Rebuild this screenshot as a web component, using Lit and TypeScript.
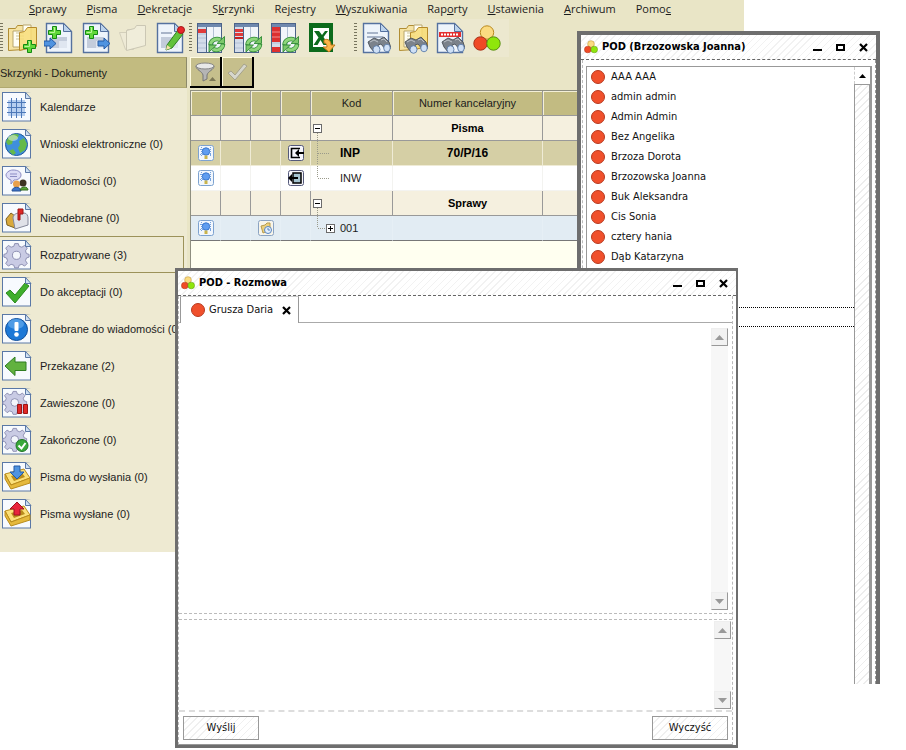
import { LitElement, html, css, svg, nothing, type TemplateResult } from "lit";
import { customElement } from "lit/decorators.js";
import { classMap } from "lit/directives/class-map.js";

/* ---------- icon parts ---------- */

const sheet = svg`
  <path d="M2.5 1.5H19.5L27.5 9.5V30.5H2.5Z" fill="#eef4fb" stroke="#55719f" stroke-width="1.4"/>
  <path d="M19.5 1.5V9.5H27.5Z" fill="#bcd3ec" stroke="#55719f"/>`;

const lines = svg`
  <path d="M6 11H17" stroke="#a8b4c8" stroke-width="2"/>
  <path d="M6 15H23V26H6Z" fill="#c3ccdb"/>
  <path d="M15 19H23V26H15Z" fill="#dfe6f0"/>`;

const plus = (x: number, y: number) => svg`
  <path d="M${x + 4.5} ${y + 0.5}h4v4h4v4h-4v4h-4v-4h-4v-4h4z" fill="#62d83a" stroke="#148a14"/>
  <path d="M${x + 5.5} ${y + 1.5}h1v5h-5" fill="none" stroke="#b9f59c"/>`;

const arrow = (x: number, y: number) => svg`
  <path d="M${x} ${y + 3}h6v-3l6 5.5l-6 5.5v-3h-6z" fill="#4f93e0" stroke="#225aa5"/>`;

const binoculars = svg`
  <g stroke="#4a5058" stroke-width="0.9">
    <path d="M7 20l6-4 5 2 5-3 5 5 2 6-5 2-5-6-3 1 1 5-5 2-4-5z" fill="#7b828b"/>
    <path d="M9 20l4-2 4 2M20 18l3-1 3 3" stroke="#c3c8cf" fill="none"/>
    <ellipse cx="15.5" cy="27.500" rx="3.500" ry="3.800" fill="#cfe0f6" stroke="#5a7ba8"/>
    <ellipse cx="26" cy="26" rx="3.300" ry="3.800" fill="#cfe0f6" stroke="#5a7ba8"/>
  </g>`;

const refresh = svg`
  <g fill="none">
    <path d="M14.500 23a6.500 6 0 0 1 10-5" stroke="#2f8a35" stroke-width="4.500"/>
    <path d="M27 22a6.500 6 0 0 1-10 5" stroke="#2f8a35" stroke-width="4.500"/>
    <path d="M14.500 22.500a6.500 6 0 0 1 10-4.500" stroke="#8fd67c" stroke-width="2.800"/>
    <path d="M27 22.500a6.500 6 0 0 1-10 4.500" stroke="#8fd67c" stroke-width="2.800"/>
  </g>
  <path d="M28.500 14.500v7h-7.500z" fill="#7cc86a" stroke="#2f8a35" stroke-width="0.900"/>
  <path d="M13 30v-7h7.500z" fill="#7cc86a" stroke="#2f8a35" stroke-width="0.900"/>`;

const folder = svg`
  <path d="M1.5 6.5h7l2-3h6v24l-15 1z" fill="#f6e3a2" stroke="#b08d33"/>
  <path d="M6 9h10V3h8v22H6z" fill="#fffef4" stroke="#b9a66c"/>
  <path d="M9 11h8M9 14h8M9 17h8" stroke="#c9c39b"/>
  <path d="M12.5 10.5l5-1 3-4h9v19l-17 4z" fill="#f8dc74" stroke="#b4892a" fill-opacity="0.85"/>`;

const registry = (red: TemplateResult<2>) => svg`
  <g transform="translate(1 0)">
    <rect x="0.5" y="1.5" width="24" height="29" fill="#f2f5fa" stroke="#4c6389"/>
    <rect x="1" y="2" width="23" height="3" fill="#6f88ae"/>
    <rect x="1" y="5" width="8" height="25" fill="#d3dcea"/>
    <path d="M1 12H9M1 16H9M1 21H9M1 26H9M16.500 5V30" stroke="#b3c0d4"/>
    <path d="M9.5 5V30" stroke="#4c6389"/>
    ${red}
  </g>${refresh}`;

const balls = svg`
  <circle cx="15" cy="9.5" r="6.7" fill="#fbdb80" stroke="#b98a20"/>
  <circle cx="8.5" cy="20.5" r="6.7" fill="#f04a25" stroke="#a8321a"/>
  <circle cx="21.5" cy="20.5" r="6.7" fill="#8fe60c" stroke="#588f12"/>`;

const gear = svg`
  <g fill="#c9cbe4" stroke="#8587ab">
    <path d="M13 4h4l1 3 3 1 3-2 3 3-2 3 1 3 3 1v3l-3 1-1 3 2 3-3 3-3-2-3 1-1 3h-4l-1-3-3-1-3 2-3-3 2-3-1-3-3-1v-3l3-1 1-3-2-3 3-3 3 2 3-1z"/>
    <circle cx="15" cy="17" r="4.5" fill="#f3f6fc"/>
  </g>`;

const tray = svg`
  <path d="M3 16L22 11L28 20L9 27Z" fill="#fbe07a" stroke="#b98c1c"/>
  <path d="M3 16V21L9 31L28 25V20L9 27Z" fill="#e5b93c" stroke="#b98c1c"/>
  <path d="M9 18L20 15L23 19L12 23Z" fill="#b98c1c"/>`;

const toolIcons: Record<string, TemplateResult<2>> = {
  folderAdd: svg`${folder}${plus(16, 18)}`,
  docIn: svg`${sheet}${lines}${plus(4, 4)}${arrow(0, 16)}`,
  docOut: svg`${sheet}${lines}${plus(4, 4)}${arrow(17, 16)}`,
  folderOff: svg`
    <path d="M1.5 10.5h7l1-3h6v20h-8z" fill="#eeead6" stroke="#d3cfbb"/>
    <path d="M8.5 8.5l8-2 2-3h9v20l-19 5z" fill="#f0edda" stroke="#cbc7b4"/>`,
  docEdit: svg`${sheet}${lines}
    <path d="M12 23L23 8L28 12L17 26L11 28Z" fill="#62c23c" stroke="#2f7f22"/>
    <path d="M11 28l1-5 4 3z" fill="#f6dfae"/>
    <circle cx="26" cy="8" r="3.5" fill="#e8262a" stroke="#a51a1a"/>`,
  reg1: registry(svg`<rect x="1" y="7" width="8" height="4" fill="#e03a3a"/>`),
  reg2: registry(svg`<path d="M1 7h8v3h-8zM1 11h8v3h-8z" fill="#e03a3a"/><path d="M1 15h8v2h-8z" fill="#c52020"/>`),
  reg3: registry(svg`<path d="M1 5h8v15h-8zM1 25h8v5h-8z" fill="#dd3030"/><path d="M1 10h8M1 15h8" stroke="#f18d8d"/>`),
  excel: svg`
    <g transform="translate(2 0)">
    <rect x="0" y="1" width="24" height="29" fill="#0c6b1c"/>
    <rect x="4" y="6" width="16" height="19" fill="#fff"/>
    <path d="M5 9h5l3 4 3-4h3l-4.500 6 5 8h-5l-3-5-3 5h-4l5-7.500z" fill="#0c6b1c"/>
    <path d="M15 18c4-2 7 1 7 5h4l-6 7-6-5h4c0-3-1-4-3-4z" fill="#fbb64a" stroke="#bd761b"/></g>`,
  docFind: svg`${sheet}<path d="M6 11H17M6 15H22" stroke="#a8b4c8" stroke-width="2"/>${binoculars}`,
  folderFind: svg`${folder}${binoculars}`,
  stampFind: svg`${sheet}
    <path d="M4 10h22v5h-22z" fill="#e53030"/>
    <path d="M6 12.500h18" stroke="#fff" stroke-width="2" stroke-dasharray="2 1"/>${binoculars}`,
  balls: svg`<g transform="translate(0 1)">${balls}</g>`,
};

const sideIcons: Record<string, TemplateResult<2>> = {
  calendar: svg`
    <rect x="6" y="8" width="17" height="16" fill="#b7cff0"/>
    <path d="M9.500 6V26M14.500 6V26M19.500 6V26M5 10.500H24M5 15.500H24M5 20.500H24" stroke="#4d78b8"/>`,
  globe: svg`
    <circle cx="14.500" cy="15.500" r="11" fill="#3f8fdc" stroke="#205a9c"/>
    <path d="M6 9c3-4 8-5 11-3l-2 4-4 1-1 4-4 1-2-3zM17 12l5-3 3 6-2 6-5 3-2-5 2-3z" fill="#65b94a"/>
    <path d="M7 22l4-2 3 4-3 2z" fill="#65b94a"/>
    <ellipse cx="11" cy="9" rx="5" ry="3" fill="#fff" opacity="0.45"/>`,
  chat: svg`
    <path d="M11 4c5 0 8 2 8 5s-3 5-7 5l-3 4v-4c-3-1-5-3-5-5s3-5 7-5z" fill="#dcdcf6" stroke="#8d8dc4"/>
    <path d="M8 8h7M8 10.500h7" stroke="#8d8dc4"/>
    <circle cx="21" cy="17" r="3.500" fill="#3c3424"/><circle cx="14.500" cy="18" r="3.500" fill="#e9a04c"/>
    <path d="M10 25c0-5 9-5 9 0z" fill="#3e74c9" stroke="#244f92"/>
    <path d="M18 24c1-4 8-4 8 0z" fill="#58a838" stroke="#326b1d"/>`,
  mailbox: svg`
    <path d="M4 16l5-6 4 3v12l-8-3z" fill="#d9a93c" stroke="#7d6323"/>
    <path d="M11 15c0-3 3-5 6-5h5c3 0 4 3 4 5v7l-13 4z" fill="#dfe1e8" stroke="#84889a"/>
    <path d="M16 6h5v5h-3v6h-2z" fill="#e02626" stroke="#9c1717"/>`,
  gear: svg`<g transform="translate(1 0) scale(0.9)">${gear}</g>`,
  check: svg`<path d="M4 16l4-3 5 5L23 6l4 3L13 26z" fill="#3fae2c" stroke="#2b8a1e"/>`,
  info: svg`
    <circle cx="14.500" cy="15.500" r="11" fill="#1d78d6" stroke="#12509a"/>
    <ellipse cx="14" cy="10" rx="8" ry="5" fill="#6fb2f0" opacity="0.6"/>
    <rect x="12.500" y="8" width="4" height="9" rx="1" fill="#fff"/>
    <circle cx="14.500" cy="20.500" r="2.300" fill="#fff"/>`,
  back: svg`<path d="M3 15L13 6V11H24V19.500H13V24.500Z" fill="#62b23f" stroke="#2f7d22"/>`,
  gearPause: svg`<g transform="translate(0 0) scale(0.850)">${gear}</g>
    <path d="M15.500 16.500h4v9h-4zM21.500 16.500h4v9h-4z" fill="#e02828" stroke="#9c1414"/>`,
  gearOk: svg`<g transform="translate(0 0) scale(0.850)">${gear}</g>
    <circle cx="20" cy="20.500" r="6" fill="#3aa93a" stroke="#1f7424"/>
    <path d="M16.500 20.500l3 3 4-5.500" fill="none" stroke="#fff" stroke-width="2"/>`,
  trayIn: svg`<g transform="translate(0 -4)">${tray}</g>
    <path d="M12 4h6v6h4l-7 7-7-7h4z" fill="#4f93e0" stroke="#225aa5"/>`,
  trayOut: svg`<g transform="translate(0 -4)">${tray}</g>
    <path d="M12 16h6v-6h4l-7-7-7 7h4z" fill="#e8243c" stroke="#9c1220"/>`,
};

const drawTool = (name: string) => html`<svg width="30" height="32" viewBox="0 0 30 32" aria-hidden="true">${toolIcons[name]}</svg>`;

const drawSide = (name: string) => html`<svg width="30" height="30" viewBox="0 0 30 30" aria-hidden="true">
  <rect x="0.500" y="0.500" width="28" height="28.500" fill="#f7fafe" stroke="#5a78a6"/>
  ${sideIcons[name]}
  <path d="M23.500 0.500L29 6.500V0Z" fill="#eeead2"/><path d="M23.500 0.500V6.500H29Z" fill="#cfe0f3" stroke="#5a78a6"/>
</svg>`;

const logo = html`<svg class="logo" width="14" height="14" viewBox="1 2 28 27" aria-hidden="true">${balls}</svg>`;

const bulb = html`<svg width="16" height="16" viewBox="0 0 16 16" aria-hidden="true">
  <rect x="0.500" y="0.500" width="15" height="15" rx="2" fill="#f2f7fd" stroke="#7da2d0"/>
  <path d="M3.500 2V12M12.500 2V12M2 4.500H14M2 9.500H14" stroke="#76a4e0" stroke-dasharray="1 1"/>
  <circle cx="8" cy="6.500" r="3.700" fill="#5f9df0" stroke="#3a78d0"/>
  <rect x="6.500" y="10.500" width="3" height="3.500" fill="#c9b44b"/>
</svg>`;

const boxIn = html`<svg width="16" height="16" viewBox="0 0 16 16" aria-hidden="true">
  <rect x="0.500" y="0.500" width="15" height="15" rx="2" fill="#f6f6fb" stroke="#54597a"/>
  <path d="M12 3.500H3.500V12.500H12" fill="none" stroke="#000" stroke-width="1.600"/>
  <path d="M7 8l4-4v3h5v2h-5v3z" fill="#000"/>
</svg>`;

const boxOut = html`<svg width="16" height="16" viewBox="0 0 16 16" aria-hidden="true">
  <rect x="0.500" y="0.500" width="15" height="15" rx="2" fill="#f6f6fb" stroke="#54597a"/>
  <path d="M5 3H13V13H5Z" fill="#a5c3cf" stroke="#000" stroke-width="1.500"/>
  <path d="M0 8l4-4v3h6v2h-6v3z" fill="#000"/>
</svg>`;

const folderClock = html`<svg width="16" height="16" viewBox="0 0 16 16" aria-hidden="true">
  <rect x="0.500" y="0.500" width="15" height="15" rx="2" fill="#f8f5ea" stroke="#8ba3c2"/>
  <path d="M3 6l4-1 2-2h3v7l-7 3z" fill="#ecd07c" stroke="#b79b4e"/>
  <circle cx="10" cy="10" r="3.500" fill="#e4effb" stroke="#5885c0"/>
  <path d="M10 8v2h2" fill="none" stroke="#5885c0"/>
</svg>`;

/* Tree guides in the "Kod" column, one 28x24 strip per row. */
const knob = (x: number, open: boolean) => svg`
  <rect x="${x + 0.5}" y="8.500" width="8" height="8" fill="#fff" stroke="#6b6b6b"/>
  <path d="M${x + 2} 12.500h5" stroke="#000"/>
  ${open ? nothing : svg`<path d="M${x + 4.5} 10v5" stroke="#000"/>`}`;

const tree: Record<string, TemplateResult<2>> = {
  root: svg`<path class="dots" d="M6.500 17V24"/>${knob(2, true)}`,
  middle: svg`<path class="dots" d="M6.500 0V24M7 12.500H19"/>`,
  last: svg`<path class="dots" d="M6.500 0V12M7 12.500H19"/>`,
  closed: svg`<path class="dots" d="M6.500 0V12M7 12.500H15"/>${knob(15, false)}`,
};

/* ---------- data ---------- */

const menu = [
  ["", "S", "prawy"], ["", "P", "isma"], ["", "D", "ekretacje"], ["S", "k", "rzynki"], ["Re", "j", "estry"],
  ["", "W", "yszukiwania"], ["Rap", "o", "rty"], ["", "U", "stawienia"], ["", "A", "rchiwum"], ["Pomo", "c", ""],
];

const toolGroups = [
  [["folderAdd", "Nowa sprawa"], ["docIn", "Pismo przychodzące"], ["docOut", "Pismo wychodzące"], ["folderOff", "Teczka"], ["docEdit", "Edycja"]],
  [["reg1", "Rejestr 1"], ["reg2", "Rejestr 2"], ["reg3", "Rejestr 3"], ["excel", "Eksport"]],
  [["docFind", "Szukaj pisma"], ["folderFind", "Szukaj sprawy"], ["stampFind", "Szukaj kodu"], ["balls", "POD"]],
];

const boxes = [
  ["calendar", "Kalendarze"], ["globe", "Wnioski elektroniczne (0)"], ["chat", "Wiadomości (0)"],
  ["mailbox", "Nieodebrane (0)"], ["gear", "Rozpatrywane (3)"], ["check", "Do akceptacji (0)"],
  ["info", "Odebrane do wiadomości (0)"], ["back", "Przekazane (2)"], ["gearPause", "Zawieszone (0)"],
  ["gearOk", "Zakończone (0)"], ["trayIn", "Pisma do wysłania (0)"], ["trayOut", "Pisma wysłane (0)"],
];

interface Row { kind: string; tree: string; code?: string; num?: string; first?: unknown; third?: unknown; fourth?: unknown; }

const rows: Row[] = [
  { kind: "group", tree: "root", num: "Pisma" },
  { kind: "current", tree: "middle", code: "INP", num: "70/P/16", first: bulb, fourth: boxIn },
  { kind: "plain", tree: "last", code: "INW", first: bulb, fourth: boxOut },
  { kind: "group", tree: "root", num: "Sprawy" },
  { kind: "case", tree: "closed", code: "001", first: bulb, third: folderClock },
];

const people = [
  "AAA AAA", "admin admin", "Admin Admin", "Bez Angelika", "Brzoza Dorota",
  "Brzozowska Joanna", "Buk Aleksandra", "Cis Sonia", "cztery hania", "Dąb Katarzyna",
];

/* ---------- shared window look ---------- */

const windowStyles = css`
  * { box-sizing: border-box; }
  :host { display: flex; flex-direction: column; background: #fff; font: 11px/14px "DejaVu Sans Condensed", "DejaVu Sans", sans-serif; color: #111; }
  button { font: inherit; color: inherit; border: 0; padding: 0; background: none; }
  svg { display: block; }
  .bar {
    display: flex; align-items: center; height: 25px; flex: none; padding: 0 7px 0 3px;
    border-bottom: 1px dashed #666;
    background: repeating-linear-gradient(135deg, #fff 0 4px, #f2f2f2 4px 5px);
  }
  .title { flex: 1; margin: 0 0 0 4px; font-size: 11px; font-weight: bold; color: #000; }
  .ctl { width: 11px; height: 11px; margin-left: 12px; }
  .dot { width: 14px; height: 14px; flex: none; border-radius: 50%; background: #f0502c; border: 1px solid #b73a20; }
`;

const windowControls = html`
  <button class="ctl" aria-label="Minimalizuj"><svg width="11" height="11"><path d="M1 8H10" stroke="#000" stroke-width="2"/></svg></button>
  <button class="ctl" aria-label="Maksymalizuj"><svg width="11" height="11"><rect x="2" y="3" width="7" height="5" fill="none" stroke="#000" stroke-width="2"/></svg></button>
  <button class="ctl" aria-label="Zamknij"><svg width="11" height="11"><path d="M2 2L9 9M9 2L2 9" stroke="#000" stroke-width="2.200"/></svg></button>`;

@customElement("people-window")
class PeopleWindow extends LitElement {
  static styles = [windowStyles, css`
    :host { border: 4px solid #6e6e6e; border-bottom: 0; }
    .inner { flex: 1; display: flex; margin-left: 1px; padding: 6px 3px 0; border-left: 1px dashed #bbb; border-right: 1px dashed #999; }
    .frame { flex: 1; display: flex; border: 1px solid #999; border-bottom: 0; }
    .list { flex: 1; margin: 0; padding: 0; list-style: none; }
    .person { display: flex; align-items: center; gap: 6px; height: 20px; padding-left: 4px; }
    .focus { height: 20px; margin-top: 40px; border: 1px dotted #000; border-width: 1px 0; }
    .scroll { width: 17px; display: flex; flex-direction: column; border-right: 1px solid #999; }
    .up { height: 17px; display: grid; place-items: center; border-left: 1px dashed #ccc; }
    .thumb { flex: 1; border: 1px solid #999; border-bottom: 0; background: repeating-linear-gradient(135deg, #fff 0 4px, #ededed 4px 5px); }
  `];

  render() {
    return html`
      <header class="bar">${logo}<h2 class="title">POD (Brzozowska Joanna)</h2>${windowControls}</header>
      <div class="inner"><div class="frame">
        <ul class="list">
          ${people.map((p) => html`<li class="person"><span class="dot"></span>${p}</li>`)}
          <li class="focus"></li>
        </ul>
        <div class="scroll">
          <button class="up" aria-label="W górę"><svg width="7" height="4"><path d="M0 4L3.500 0L7 4Z"/></svg></button>
          <div class="thumb"></div>
        </div>
      </div></div>`;
  }
}

@customElement("chat-window")
class ChatWindow extends LitElement {
  static styles = [windowStyles, css`
    :host { border: 3px solid #6e6e6e; border-right-width: 2px; }
    .inner { flex: 1; display: flex; flex-direction: column; margin: 0 3px 2px 0; border: 1px dashed #bbb; border-top: 0; border-bottom: 1px solid #999; }
    .tabs { display: flex; height: 27px; }
    .tabs::before { content: ""; width: 1px; border-bottom: 1px dashed #bbb; }
    .tabs::after { content: ""; flex: 1; border-bottom: 1px solid #aaa; }
    .tab { display: flex; align-items: center; width: 119px; padding: 0 7px 0 10px; border: 1px solid #999; border-width: 0 1px; border-top: 1px solid #ccc; }
    .name { flex: 1; margin-left: 4px; white-space: nowrap; text-align: left; }
    .pane { display: flex; border-bottom: 1px dashed #bbb; }
    .log { height: 291px; padding: 5px 4px 3px 0; }
    .compose { height: 93px; margin-top: 5px; padding: 1px; border-top: 1px dashed #bbb; border-bottom: 2px dashed #ddd; }
    .text { flex: 1; resize: none; border: 0; outline: 0; padding: 4px; font: inherit; overflow: hidden; }
    .scroll { width: 17px; display: flex; flex-direction: column; justify-content: space-between; background: #f7f7f7; }
    .arrow { height: 18px; display: grid; place-items: center; background: #f2f2f2; border: 1px solid #eee; border-right-color: #999; border-bottom-color: #999; }
    .actions { display: flex; justify-content: space-between; padding: 4px; }
    .action { width: 76px; height: 24px; border: 1px solid #999; background: repeating-linear-gradient(135deg, #fff 0 4px, #f0f0f0 4px 5px); }
  `];

  private scroll() {
    return html`<div class="scroll">
      <button class="arrow" aria-label="W górę"><svg width="9" height="5"><path d="M0 5L4.500 0L9 5Z" fill="#999"/></svg></button>
      <button class="arrow" aria-label="W dół"><svg width="9" height="5"><path d="M0 0L4.500 5L9 0Z" fill="#999"/></svg></button>
    </div>`;
  }

  render() {
    return html`
      <header class="bar">${logo}<h2 class="title">POD - Rozmowa</h2>${windowControls}</header>
      <div class="inner">
        <div class="tabs"><div class="tab">
          <span class="dot"></span><button class="name">Grusza Daria</button>
          <button aria-label="Zamknij kartę"><svg width="9" height="9"><path d="M1 1L8 8M8 1L1 8" stroke="#000" stroke-width="2.200"/></svg></button>
        </div></div>
        <div class="pane log"><textarea class="text" readonly aria-label="Rozmowa"></textarea>${this.scroll()}</div>
        <div class="pane compose"><textarea class="text" aria-label="Wiadomość"></textarea>${this.scroll()}</div>
        <div class="actions"><button class="action">Wyślij</button><button class="action">Wyczyść</button></div>
      </div>`;
  }
}

@customElement("app-root")
class AppRoot extends LitElement {
  static styles = css`
    * { box-sizing: border-box; }
    :host { display: block; position: relative; min-height: 100vh; background: #fff; font: 11px/14px "Liberation Sans", Arial, sans-serif; color: #1c1c1c; }
    button { font: inherit; color: inherit; border: 0; padding: 0; background: none; }
    svg { display: block; }
    .app { margin-right: 162px; background: #e9e5c6; }
    .menu { display: flex; gap: 20px; height: 19px; align-items: flex-start; padding: 1px 0 0 29px; font: 11px/16px "Open Sans", "Noto Sans", sans-serif; }
    .tools { display: flex; height: 38px; width: max-content; padding-right: 3px; background: #ece8cf; }
    .group { display: flex; align-items: center; gap: 7px; padding-right: 4px; }
    .group + .group + .group { padding-left: 13px; }
    .grip { width: 3px; height: 30px; background: repeating-linear-gradient(#77745e 0 1px, transparent 1px 3px); margin-right: -3px; }
    .columns { display: flex; height: 495px; }
    .side { width: 187px; flex: none; background: #eeead2; }
    .head { height: 31px; margin: 0; padding: 8px 0 0; font: 11px/14px "Liberation Sans", Arial, sans-serif; background: #c2bb80; border: 1px solid #b0a970; border-left: 0; border-right-color: #8d8a6b; }
    .boxes { margin: 0; padding: 0; list-style: none; }
    .box { display: flex; align-items: center; gap: 8px; width: 184px; height: 37px; padding-left: 2px; white-space: nowrap; overflow: hidden; text-align: left; }
    .box.on { border: 1px solid #9c925a; border-left: 0; }
    .main { flex: 1; min-width: 0; padding-left: 3px; display: flex; flex-direction: column; }
    .filters { display: flex; height: 33px; }
    .filter { width: 32px; height: 31px; display: grid; place-items: center; background: #c6bf8c; border: 1px solid #000; border-width: 0 2px 2px 0; box-shadow: inset 1px 1px #fffbe0; }
    .sheet { flex: 1; background: #fffff0; border: 1px solid #8f8f80; border-bottom: 0; }
    table { width: 100%; table-layout: fixed; border-collapse: separate; border-spacing: 0; }
    th, td { height: 25px; padding: 0; text-align: center; border: 1px solid #999; border-width: 0 1px 1px 0; font-weight: normal; line-height: 14px; }
    th { background: #c2bb82; box-shadow: inset 1px 1px #f3efd8; }
    .icon { width: 30px; }
    .code { width: 82px; }
    .num { width: 150px; }
    .group-row td { background: #f5f0df; }
    .current td { background: #d5cfa5; border-color: #efebd5; font-size: 12px; }
    .plain td { background: #fff; border-color: #f3f3f0; }
    .case td { background: #e2ecf3; border-color: #e6eff5; border-bottom-color: #777; }
    .strong { font-weight: bold; color: #000; }
    .pic svg { margin: 0 auto; }
    .node { display: flex; align-items: center; gap: 1px; }
    .dots { fill: none; stroke: #9a9a8a; stroke-dasharray: 1 1; }
    people-window { position: absolute; left: 577px; top: 31px; width: 303px; height: 653px; }
    chat-window { position: absolute; left: 175px; top: 268px; width: 563px; height: 480px; }
  `;

  render() {
    return html`
      <div class="app">
        <nav class="menu">${menu.map(([a, u, b]) => html`<button>${a}<u>${u}</u>${b}</button>`)}</nav>
        <div class="tools">
          ${toolGroups.map((g) => html`<div class="group"><span class="grip"></span>
            ${g.map(([icon, label]) => html`<button aria-label=${label}>${drawTool(icon)}</button>`)}</div>`)}
        </div>
        <div class="columns">
          <aside class="side">
            <h2 class="head">Skrzynki - Dokumenty</h2>
            <ul class="boxes">${boxes.map(([icon, label]) => html`
              <li><button class=${classMap({ box: true, on: icon === "gear" })}>${drawSide(icon)}<span>${label}</span></button></li>`)}
            </ul>
          </aside>
          <main class="main">
            <div class="filters">
              <button class="filter" aria-label="Filtr"><svg width="24" height="24" viewBox="0 0 24 24">
                <path d="M3 6c0 4 6 5 7 9v6l4-2v-4c1-4 7-5 7-9z" fill="#b5b5b5" stroke="#777"/>
                <ellipse cx="12" cy="6" rx="9" ry="3" fill="#e8e8e8" stroke="#888"/>
                <path d="M16 21L19.500 17L23 21Z" fill="#7d7856"/></svg></button>
              <button class="filter" aria-label="Zatwierdź"><svg width="24" height="24" viewBox="0 0 24 24">
                <path d="M3 13l3-2 4 4L19 4l3 2L10 20z" fill="#d6d6cc" stroke="#a5a28c"/></svg></button>
            </div>
            <div class="sheet"><table>
              <thead><tr>
                <th class="icon"></th><th class="icon"></th><th class="icon"></th><th class="icon"></th>
                <th class="code">Kod</th><th class="num">Numer kancelaryjny</th><th></th>
              </tr></thead>
              <tbody>${rows.map((r) => html`
                <tr class=${r.kind === "group" ? "group-row" : r.kind}>
                  <td class="pic">${r.first}</td><td></td><td class="pic">${r.third}</td><td class="pic">${r.fourth}</td>
                  <td><div class="node"><svg width="28" height="24">${tree[r.tree]}</svg>
                    <span class=${r.kind === "current" ? "strong" : ""}>${r.code}</span></div></td>
                  <td class="strong">${r.num}</td><td></td>
                </tr>`)}
              </tbody>
            </table></div>
          </main>
        </div>
      </div>
      <people-window></people-window>
      <chat-window></chat-window>`;
  }
}
